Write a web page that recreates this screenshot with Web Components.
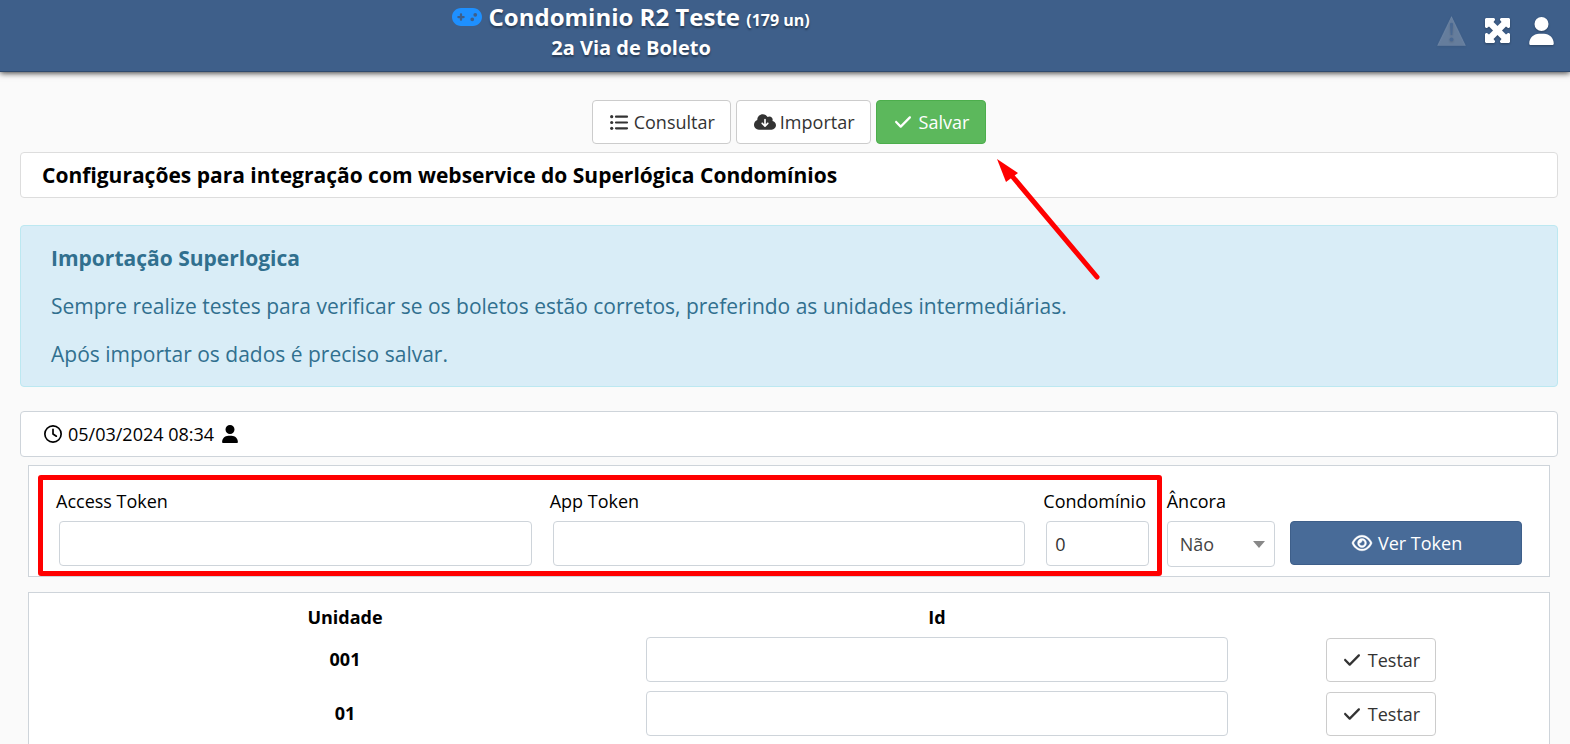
<!DOCTYPE html>
<html lang="pt-BR">
<head>
<meta charset="utf-8">
<title>2a Via de Boleto</title>
<style>
  body { margin: 0; background: #fafafa; color: #000; font: 18px/26px "Open Sans", sans-serif; }
</style>
</head>
<body>
<boleto-page></boleto-page>

<script>
const ICONS = {
  gamepad: ['0 64 640 384', '<path fill-rule="evenodd" d="M192 64C86 64 0 150 0 256S86 448 192 448H448c106 0 192-86 192-192s-86-192-192-192H192zM496 168a40 40 0 1 1 0 80 40 40 0 1 1 0-80zM392 304a40 40 0 1 1 80 0 40 40 0 1 1 -80 0zM168 200c0-13.3 10.7-24 24-24s24 10.7 24 24v32h32c13.3 0 24 10.7 24 24s-10.7 24-24 24H216v32c0 13.3-10.7 24-24 24s-24-10.7-24-24V280H136c-13.3 0-24-10.7-24-24s10.7-24 24-24h32V200z"/>'],
  warning: ['0 0 29 30', '<path d="M14.500 .5L28.500 29.500H.5z" fill-opacity=".22" stroke="#fff" stroke-opacity=".08" stroke-linejoin="round"/><path d="M13 7.500q1.500-1.500 3 0l-.7 11.500h-1.600z" fill="#4a6993"/><circle cx="14.500" cy="23.500" r="2" fill="#4a6993"/>'],
  expand: ['0 0 25 25', '<path d="M1 0H9L10 1V2L8.500 4L12.500 8L16.500 4L15 2V1L16 0H24L25 1V9L24 10H23L21 8.500L17 12.500L21 16.500L23 15H24L25 16V24L24 25H16L15 24V23L16.500 21L12.500 17L8.500 21L10 23V24L9 25H1L0 24V16L1 15H2L4 16.500L8 12.500L4 8.500L2 10H1L0 9V1Z"/>'],
  user: ['0 0 448 512', '<path d="M224 256A128 128 0 1 0 224 0a128 128 0 1 0 0 256zm-45.700 48C79.800 304 0 383.800 0 482.300C0 498.700 13.300 512 29.700 512H418.300c16.400 0 29.700-13.300 29.700-29.700C448 383.800 368.200 304 269.700 304H178.300z"/>'],
  list: ['0 0 18 15', '<circle cx="1.700" cy="1.700" r="1.600"/><circle cx="1.700" cy="7.500" r="1.600"/><circle cx="1.700" cy="13.300" r="1.600"/><path d="M6 1.700h11M6 7.500h11M6 13.300h11" stroke="currentColor" stroke-width="2.200" stroke-linecap="round"/>'],
  cloud: ['0 32 640 448', '<path fill-rule="evenodd" d="M144 480C64.500 480 0 415.500 0 336c0-62.800 40.200-116.200 96.200-135.900c-.1-2.700-.2-5.400-.2-8.100c0-88.400 71.600-160 160-160c59.300 0 111 32.200 138.700 80.200C409.900 102 428.300 96 448 96c53 0 96 43 96 96c0 12.200-2.300 23.800-6.400 34.600C596 238.400 640 290.100 640 352c0 70.700-57.300 128-128 128H144zm79-167l80 80c9.400 9.400 24.600 9.400 33.900 0l80-80c9.400-9.400 9.400-24.600 0-33.900s-24.600-9.400-33.900 0l-39 39V184c0-13.300-10.700-24-24-24s-24 10.700-24 24V318.100l-39-39c-9.400-9.400-24.600-9.400-33.900 0s-9.400 24.600 0 33.900z"/>'],
  check: ['0 96 448 320', '<path d="M438.600 105.400c12.500 12.500 12.500 32.800 0 45.300l-256 256c-12.500 12.500-32.800 12.500-45.300 0l-128-128c-12.500-12.500-12.500-32.800 0-45.300s32.800-12.500 45.300 0L160 338.700 393.400 105.400c12.500-12.500 32.800-12.500 45.300 0z"/>'],
  clock: ['0 0 512 512', '<path fill-rule="evenodd" d="M464 256A208 208 0 1 1 48 256a208 208 0 1 1 416 0zM0 256a256 256 0 1 0 512 0A256 256 0 1 0 0 256zM232 120V256c0 8 4 15.500 10.700 20l96 64c11 7.400 25.900 4.400 33.300-6.700s4.400-25.900-6.700-33.300L280 243.200V120c0-13.300-10.700-24-24-24s-24 10.700-24 24z"/>'],
  eye: ['0 32 576 448', '<path fill-rule="evenodd" stroke="currentColor" stroke-width="12" d="M288 80c-65.200 0-118.800 29.600-159.900 67.700C89.600 183.500 63 226 49.400 256c13.600 30 40.200 72.500 78.600 108.300C169.200 402.400 222.800 432 288 432s118.800-29.600 159.900-67.700C486.400 328.500 513 286 526.600 256c-13.600-30-40.200-72.500-78.600-108.300C406.800 109.600 353.200 80 288 80zM95.400 112.600C142.500 68.800 207.200 32 288 32s145.500 36.800 192.600 80.600c46.800 43.500 78.100 95.400 93 131.100c3.300 7.900 3.300 16.700 0 24.600c-14.900 35.700-46.200 87.700-93 131.100C433.500 443.200 368.800 480 288 480s-145.500-36.800-192.600-80.600C48.600 356 17.300 304 2.500 268.300c-3.300-7.900-3.300-16.700 0-24.600C17.300 208 48.600 156 95.400 112.600z"/><path fill-rule="evenodd" stroke="currentColor" stroke-width="12" d="M288 336c44.200 0 80-35.800 80-80s-35.800-80-80-80c-.7 0-1.300 0-2 0c1.300 5.100 2 10.500 2 16c0 35.300-28.700 64-64 64c-5.500 0-10.900-.7-16-2c0 .7 0 1.300 0 2c0 44.200 35.800 80 80 80zm0-208a128 128 0 1 1 0 256 128 128 0 1 1 0-256z"/>']
};

function define(name, html, setup) {
  customElements.define(name, class extends HTMLElement {
    constructor() {
      super();
      const t = document.createElement('template');
      t.innerHTML = html;
      this.attachShadow({ mode: 'open' }).append(t.content.cloneNode(true));
    }
    connectedCallback() { if (setup) setup.call(this, this.shadowRoot); }
  });
}

define('app-icon', `
  <style>
    :host { display: inline-block; flex: none; width: 18px; height: 18px; }
    svg { display: block; width: 100%; height: 100%; fill: currentColor; overflow: visible; }
  </style>
  <svg aria-hidden="true"></svg>`,
  function (root) {
    const [box, shapes] = ICONS[this.getAttribute('name')];
    const svg = root.querySelector('svg');
    svg.setAttribute('viewBox', box);
    svg.innerHTML = shapes;
  });

define('app-button', `
  <style>
    :host { display: inline-block; }
    button { box-sizing: border-box; width: 100%; height: 44px; padding: 0 15px 0 17px; display: flex; align-items: center; justify-content: center; gap: 6px;
      font: inherit; color: #333; background: #fff; border: 1px solid #ccc; border-radius: 4px; cursor: pointer; }
    :host([kind=success]) button { padding: 0 16px 0 18px; color: #fff; background: #5cb85c; border-color: #4cae4c; }
    :host([kind=primary]) button { color: #fff; background: #486b98; border-color: #3e5f8a; }
    :host([wide]) button { gap: 8px; }
  </style>
  <button type="button"><slot name="icon"></slot><span><slot></slot></span></button>`);

define('app-header', `
  <style>
    :host { display: flex; box-sizing: border-box; height: 72px; background: #3e5f8a; color: #fff; border-bottom: 1px solid #2f4a6d;
      box-shadow: 0 1px 6px rgba(0,0,0,.8); text-shadow: 0 2px 2px rgba(0,0,0,.4); position: relative; }
    .titles { flex: 1; text-align: center; font-weight: 700; }
    h1, h2 { margin: 0; font-weight: 700; }
    h1 { font-size: 24px; line-height: 34px; }
    h1 small { font-size: 16px; }
    h1 app-icon { width: 30px; height: 18px; color: #1e90ff; }
    h2 { font-size: 20px; line-height: 26px; margin-top: -2px; }
    nav { flex: none; width: 292px; padding: 0 16px 10px 0; display: flex; align-items: center; justify-content: flex-end; gap: 19px; }
    nav a { display: block; color: inherit; }
    nav app-icon { display: block; filter: drop-shadow(0 1px 1px rgba(0,0,0,.3)); }
    .warn { width: 29px; height: 30px; }
    .exp { width: 25px; height: 25px; }
    .usr { width: 25px; height: 28px; }
  </style>
  <div class="titles">
    <h1><app-icon name="gamepad"></app-icon> Condominio R2 Teste <small>(179 un)</small></h1>
    <h2>2a Via de Boleto</h2>
  </div>
  <nav>
    <a href="#alertas" aria-label="Alertas"><app-icon class="warn" name="warning"></app-icon></a>
    <a href="#tela" aria-label="Tela cheia"><app-icon class="exp" name="expand"></app-icon></a>
    <a href="#conta" aria-label="Conta"><app-icon class="usr" name="user"></app-icon></a>
  </nav>`);

define('app-toolbar', `
  <style>
    :host { display: flex; justify-content: center; gap: 5px; }
    .save { position: relative; }
    .pointer { position: absolute; left: 120px; top: 58px; width: 104px; height: 122px; z-index: 2; pointer-events: none; }
    .list { width: 18px; height: 15px; }
    .cloud { width: 22px; height: 16px; margin-right: -2px; }
    .check { width: 16px; height: 12px; }
  </style>
  <app-button><app-icon slot="icon" class="list" name="list"></app-icon>Consultar</app-button>
  <app-button><app-icon slot="icon" class="cloud" name="cloud"></app-icon>Importar</app-button>
  <div class="save">
    <app-button kind="success" wide><app-icon slot="icon" class="check" name="check"></app-icon>Salvar</app-button>
    <svg class="pointer" viewBox="0 0 104 122" aria-hidden="true">
      <path d="M101 119L16 18" stroke="#f00" stroke-width="5" stroke-linecap="round"/>
      <path d="M1 1L22 15L10 24Z" fill="#f00"/>
    </svg>
  </div>`);

define('app-panel', `
  <style>
    :host { display: block; box-sizing: border-box; background: #fff; border: 1px solid #ced4da; }
    :host([rounded]) { border-radius: 4px; padding: 9px 23px; }
    :host([title-bar]) { padding: 9px 21px; border-color: #ddd; font-size: 21px; font-weight: 700; }
  </style>
  <slot></slot>`);

define('app-alert', `
  <style>
    :host { display: block; box-sizing: border-box; padding: 18px 30px; background: #d9edf7; border: 1px solid #bce8f1; border-radius: 4px;
      color: #31708f; font-size: 21px; line-height: 28px; }
    h3 { margin: 0; font-size: 21px; font-weight: 700; }
    ::slotted(p) { margin: 20px 0 0; }
  </style>
  <h3><slot name="title"></slot></h3>
  <slot></slot>`);

define('token-form', `
  <style>
    :host { display: block; }
    form { position: relative; display: grid; grid-template-columns: repeat(12, minmax(0, 1fr)); column-gap: 15px; padding: 22px 27px 9px; }
    .c4 { grid-column: span 4; }
    .c2 { grid-column: span 2; padding-top: 33px; }
    label { display: block; line-height: 26px; margin-bottom: 7px; white-space: nowrap; }
    input { display: block; box-sizing: border-box; width: calc(100% - 6px); height: 45px; margin: 0 3px; padding: 0 8px; font: inherit; color: #333;
      background: #fff; border: 1px solid #ced4da; border-radius: 4px; }
    .pick { position: relative; }
    select { appearance: none; display: block; box-sizing: border-box; width: 100%; height: 46px; padding: 0 12px; font: inherit; color: #444;
      background: #fff; border: 1px solid #ced4da; border-radius: 4px; }
    .pick::after { content: ""; position: absolute; right: 10px; top: 20px; border: 6px solid transparent; border-top: 7px solid #888; border-bottom: 0; pointer-events: none; }
    app-button { display: block; }
    .eye { width: 20px; height: 16px; }
    .mark { position: absolute; grid-column: 1 / 10; top: 9px; bottom: 0; left: -18px; right: -10px; border: 5px solid #f00; border-radius: 3px; pointer-events: none; }
  </style>
  <form>
    <div class="c4"><label for="access">Access Token</label><input id="access" type="text"></div>
    <div class="c4"><label for="app">App Token</label><input id="app" type="text"></div>
    <div><label for="cond">Condomínio</label><input id="cond" type="text" value="0"></div>
    <div><label for="anc">Âncora</label><div class="pick"><select id="anc"><option>Não</option><option>Sim</option></select></div></div>
    <div class="c2"><app-button kind="primary"><app-icon slot="icon" class="eye" name="eye"></app-icon>Ver Token</app-button></div>
    <div class="mark"></div>
  </form>`);

define('unit-table', `
  <style>
    :host { display: block; padding: 10px 20px; }
    table { width: 100%; table-layout: fixed; border-collapse: collapse; }
    th { padding: 0 0 2px; font-weight: 700; text-align: center; }
    thead th { height: 28px; }
    td { padding: 4px 5px 5px; text-align: center; }
    thead td { padding: 0; }
    .wide { width: 40%; }
    input { display: block; box-sizing: border-box; width: 100%; height: 45px; padding: 0 8px; font: inherit; background: #fff; border: 1px solid #ced4da; border-radius: 4px; }
    app-button { vertical-align: middle; }
    .check { width: 16px; height: 12px; }
  </style>
  <table>
    <thead><tr><th class="wide" scope="col">Unidade</th><th class="wide" scope="col">Id</th><td></td></tr></thead>
    <tbody></tbody>
  </table>`,
  function (root) {
    root.querySelector('tbody').innerHTML = this.getAttribute('units').split(' ').map(u => `
      <tr><th scope="row" id="u${u}">${u}</th><td><input type="text" aria-labelledby="u${u}"></td>
      <td><app-button wide><app-icon slot="icon" class="check" name="check"></app-icon>Testar</app-button></td></tr>`).join('');
  });

define('boleto-page', `
  <style>
    :host { display: block; }
    main { padding: 28px 12px 0 20px; }
    .heading { margin-top: 8px; }
    .notice { margin-top: 27px; }
    .stamp { margin-top: 24px; }
    .stamp div { display: flex; align-items: center; gap: 6px; }
    .box { margin: 8px 8px 0; }
    .units { margin-top: 15px; }
    h3 { margin: 0; font: inherit; }
    .usr { width: 16px; height: 18px; margin-left: 2px; }
  </style>
  <app-header></app-header>
  <main>
    <app-toolbar></app-toolbar>
    <app-panel class="heading" rounded title-bar><h3>Configurações para integração com webservice do Superlógica Condomínios</h3></app-panel>
    <app-alert class="notice">
      <span slot="title">Importação Superlogica</span>
      <p>Sempre realize testes para verificar se os boletos estão corretos, preferindo as unidades intermediárias.</p>
      <p>Após importar os dados é preciso salvar.</p>
    </app-alert>
    <app-panel class="stamp" rounded><div><app-icon name="clock"></app-icon><span>05/03/2024 08:34</span><app-icon class="usr" name="user"></app-icon></div></app-panel>
    <app-panel class="box"><token-form></token-form></app-panel>
    <app-panel class="box units"><unit-table units="001 01"></unit-table></app-panel>
  </main>`);
</script>
</body>
</html>
